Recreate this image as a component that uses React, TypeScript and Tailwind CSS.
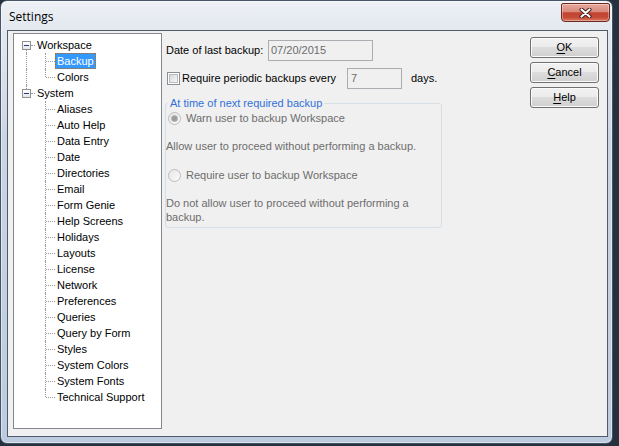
import React from "react";

const ui = "font-['Liberation_Sans',Arial,sans-serif] text-[11px]";

const TREE = [
  { label: "Workspace", children: ["Backup", "Colors"] },
  {
    label: "System",
    children: [
      "Aliases",
      "Auto Help",
      "Data Entry",
      "Date",
      "Directories",
      "Email",
      "Form Genie",
      "Help Screens",
      "Holidays",
      "Layouts",
      "License",
      "Network",
      "Preferences",
      "Queries",
      "Query by Form",
      "Styles",
      "System Colors",
      "System Fonts",
      "Technical Support",
    ],
  },
];

const dot = "border-dotted border-[#9a9a9a]";

function Label({ text, selected }: { text: string; selected?: boolean }) {
  return (
    <span
      className={`h-4 whitespace-nowrap border px-px leading-[14px] ${
        selected ? "border-dotted border-[#cc6600] bg-[#3399ff] text-white" : "border-transparent text-black"
      }`}
    >
      {text}
    </span>
  );
}

function RootRow({ label, first, last }: { label: string; first: boolean; last: boolean }) {
  return (
    <div className="flex h-4 items-center">
      <div className="relative h-4 w-[21px] shrink-0">
        <span
          className={`absolute left-[12px] w-0 border-l ${dot} ${
            first ? "top-[8px] bottom-0" : last ? "top-0 h-[8px]" : "inset-y-0"
          }`}
        />
        <span className={`absolute left-[17px] top-[8px] h-0 w-[4px] border-t ${dot}`} />
        <span className="absolute left-[8px] top-[4px] flex h-[9px] w-[9px] items-center justify-center border border-[#919191] bg-[linear-gradient(to_bottom,#ffffff,#e6e6e6)]">
          <span className="h-px w-[5px] bg-[#1c3b8c]" />
        </span>
      </div>
      <Label text={label} />
    </div>
  );
}

function ChildRow({
  label,
  lastChild,
  rootContinues,
  selected,
}: {
  label: string;
  lastChild: boolean;
  rootContinues: boolean;
  selected?: boolean;
}) {
  return (
    <div className="flex h-4 items-center">
      <div className="relative h-4 w-[41px] shrink-0">
        {rootContinues && <span className={`absolute inset-y-0 left-[12px] w-0 border-l ${dot}`} />}
        <span className={`absolute left-[31px] top-0 w-0 border-l ${dot} ${lastChild ? "h-[8px]" : "h-4"}`} />
        <span className={`absolute left-[32px] top-[8px] h-0 w-[9px] border-t ${dot}`} />
      </div>
      <Label text={label} selected={selected} />
    </div>
  );
}

function Tree() {
  return (
    <div className="mt-[2px] h-[396px] w-[149px] shrink-0 border border-[#828790] bg-white pt-[3px]">
      {TREE.map((g, gi) => {
        const lastGroup = gi === TREE.length - 1;
        return (
          <div key={g.label}>
            <RootRow label={g.label} first={gi === 0} last={lastGroup} />
            {g.children.map((c, ci) => (
              <ChildRow
                key={c}
                label={c}
                lastChild={ci === g.children.length - 1}
                rootContinues={!lastGroup}
                selected={c === "Backup"}
              />
            ))}
          </div>
        );
      })}
    </div>
  );
}

function Radio({ checked }: { checked?: boolean }) {
  return (
    <span className="flex h-[13px] w-[13px] shrink-0 items-center justify-center rounded-full border border-[#bcbcbc] bg-[linear-gradient(to_bottom_right,#e6e6e6,#fbfbfb)]">
      {checked && <span className="h-[5px] w-[5px] rounded-full bg-[#9c9c9c] shadow-[0_0_0_1px_#b8b8b8]" />}
    </span>
  );
}

function Button({ first, rest }: { first: string; rest: string }) {
  return (
    <button
      type="button"
      className="flex h-[21px] w-[69px] items-center justify-center rounded-[3px] border border-[#707070] bg-[linear-gradient(to_bottom,#f2f2f2_0%,#ebebeb_50%,#dddddd_50%,#cfcfcf_100%)] text-black shadow-[inset_0_0_0_1px_#fbfbfb]"
    >
      <span>
        <span className="underline underline-offset-[2px]">{first}</span>
        {rest}
      </span>
    </button>
  );
}

function Backup() {
  return (
    <div className="ml-[3px] mt-[9px] w-[277px] shrink-0 text-black">
      <div className="flex h-[21px] items-center">
        <span className="w-[103px] shrink-0 whitespace-nowrap pl-px">Date of last backup:</span>
        <div className="flex h-[21px] w-[105px] items-center border border-[#abadb3] pl-[2px] text-[#6d6d6d]">
          07/20/2015
        </div>
      </div>

      <div className="mt-[7px] flex h-[21px] items-center">
        <div className="flex w-[182px] shrink-0 items-center">
          <span className="ml-[2px] flex h-[13px] w-[13px] items-center justify-center border border-[#8e8f8f] bg-white">
            <span className="h-[9px] w-[9px] border border-[#b7bcc3] bg-[linear-gradient(to_bottom_right,#d8d8d8,#f7f7f7)]" />
          </span>
          <span className="ml-[2px] whitespace-nowrap">Require periodic backups every</span>
        </div>
        <div className="flex h-[21px] w-[55px] items-center border border-[#abadb3] pl-[3px] text-[#6d6d6d]">7</div>
        <span className="ml-[9px]">days.</span>
      </div>

      <fieldset className="mt-[8px] w-[277px] rounded-[3px] border border-[#d5dfe5] pb-[3px] text-[#6d6d6d]">
        <legend className="ml-[2px] px-[2px] leading-[13px] text-[#3070d8]">At time of next required backup</legend>
        <div className="flex h-4 items-center pl-[2px]">
          <Radio checked />
          <span className="ml-[5px] whitespace-nowrap">Warn user to backup Workspace</span>
        </div>
        <div className="mt-[12px] h-4 whitespace-nowrap leading-4">Allow user to proceed without performing a backup.</div>
        <div className="mt-[13px] flex h-4 items-center pl-[2px]">
          <Radio />
          <span className="ml-[5px] whitespace-nowrap">Require user to backup Workspace</span>
        </div>
        <div className="mt-[13px] whitespace-nowrap leading-[14px]">
          Do not allow user to proceed without performing a
          <br />
          backup.
        </div>
      </fieldset>
    </div>
  );
}

export default function App() {
  return (
    <div className={`relative h-[446px] w-[619px] overflow-hidden bg-[#27303d] ${ui}`}>
      <div className="flex h-[444px] w-[613px] flex-col rounded-[7px] border border-[#46546a] bg-[linear-gradient(to_bottom,#eef1f5_0px,#e2e8ef_30px,#cbd5e2_140px,#bccbde_444px)] shadow-[inset_0_0_0_1px_rgba(255,255,255,0.45)]">
        <div className="flex h-[29px] shrink-0">
          <span className="mt-[8px] pl-[8px] font-['Open_Sans',sans-serif] text-[12px] leading-[16px] text-black">
            Settings
          </span>
          <button
            type="button"
            aria-label="Close"
            className="ml-auto mr-[2px] mt-[2px] flex h-[19px] w-[49px] items-center justify-center rounded-b-[4px] rounded-t-[2px] border border-[#6d2a21] bg-[linear-gradient(to_bottom,#e7a89c_0%,#d98a7c_45%,#c2422f_52%,#c54b37_78%,#d9765d_100%)] shadow-[inset_0_0_0_1px_rgba(255,255,255,0.35)]"
          >
            <svg width="13" height="10" viewBox="0 0 13 10">
              <path d="M2.5 1.5 L10.5 8.5 M10.5 1.5 L2.5 8.5" stroke="#3b1b15" strokeWidth="4" strokeLinecap="round" />
              <path d="M2.5 1.5 L10.5 8.5 M10.5 1.5 L2.5 8.5" stroke="#ffffff" strokeWidth="2.2" strokeLinecap="round" />
            </svg>
          </button>
        </div>

        <div className="ml-[6px] flex h-[407px] w-[601px] border border-[#4f5b6c] bg-[#f0f0f0] pl-[5px]">
          <Tree />
          <Backup />
          <div className="ml-auto mr-[8px] mt-[6px] flex w-[69px] flex-col gap-[4px]">
            <Button first="O" rest="K" />
            <Button first="C" rest="ancel" />
            <Button first="H" rest="elp" />
          </div>
        </div>
      </div>
    </div>
  );
}
